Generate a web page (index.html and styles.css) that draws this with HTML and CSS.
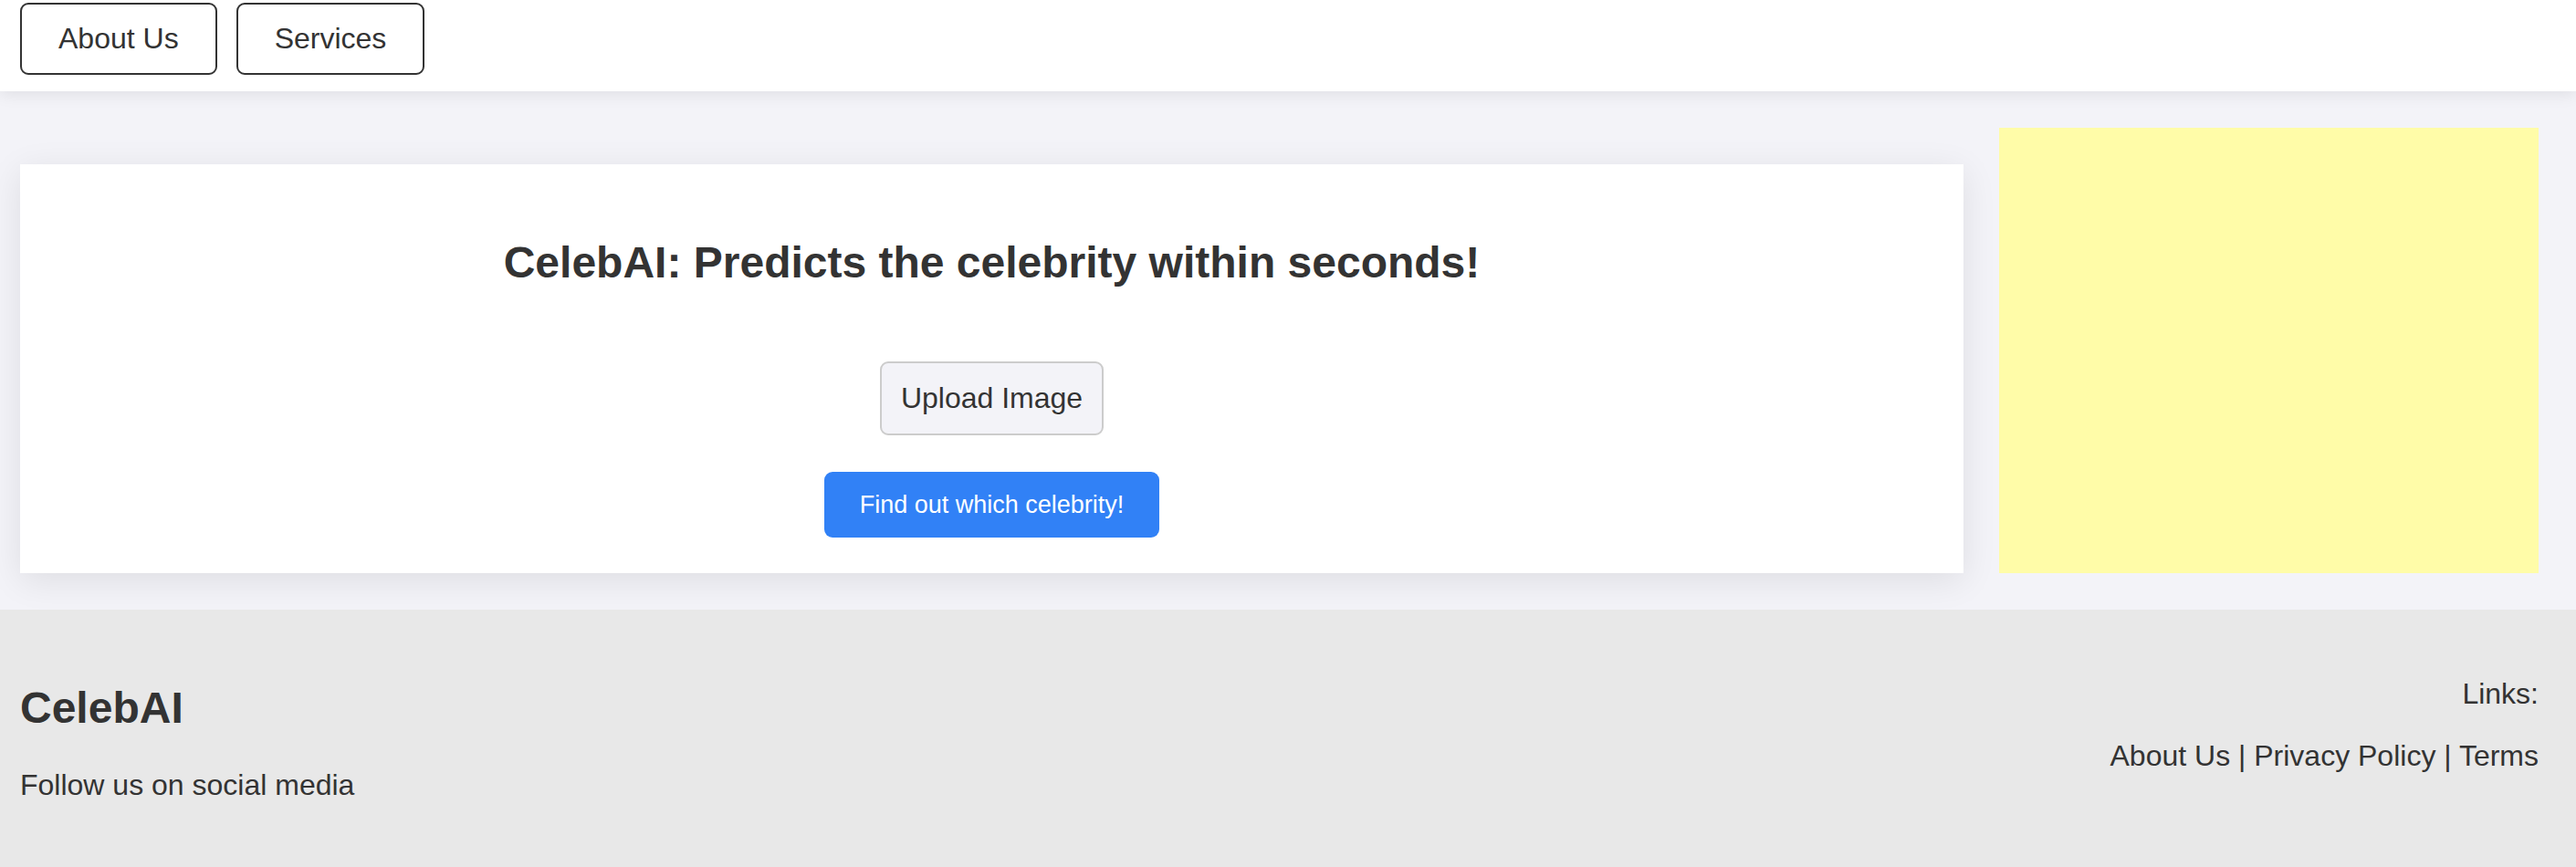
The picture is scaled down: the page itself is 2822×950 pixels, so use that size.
FILE: index.html
```html
<!DOCTYPE html>
<html lang="en">
<head>
<meta charset="utf-8">
<title>CelebAI</title>
<link rel="stylesheet" href="styles.css">
</head>
<body>
<nav class="topnav">
  <button class="nav-btn">About Us</button>
  <button class="nav-btn">Services</button>
</nav>
<main class="main">
  <section class="card">
    <h2 class="card-title">CelebAI: Predicts the celebrity within seconds!</h2>
    <label class="upload-btn">Upload Image</label>
    <button class="find-btn">Find out which celebrity!</button>
  </section>
  <aside class="ad-box"></aside>
</main>
<footer class="footer">
  <div class="footer-left">
    <h2 class="footer-brand">CelebAI</h2>
    <p class="footer-follow">Follow us on social media</p>
  </div>
  <div class="footer-right">
    <p class="footer-links-title">Links:</p>
    <p class="footer-links">About Us | Privacy Policy | Terms</p>
  </div>
</footer>
</body>
</html>
```

FILE: styles.css
```css
* { box-sizing: border-box; }

body {
  margin: 0;
  font-family: "Liberation Sans", Arial, Helvetica, sans-serif;
  color: #333;
  background: #f3f3f8;
}

.topnav {
  position: relative;
  z-index: 2;
  display: flex;
  gap: 21px;
  padding: 3px 22px 18px;
  background: #fff;
  box-shadow: 0 4px 16px rgba(0, 0, 0, 0.08);
}

.nav-btn {
  font-family: inherit;
  font-size: 32px;
  line-height: 37px;
  color: #333;
  background: #fff;
  border: 2px solid #333;
  border-radius: 9px;
  padding: 19px 40px;
  height: 79px;
}

.main {
  display: flex;
  align-items: flex-end;
  gap: 39px;
  padding: 40px 41px 40px 22px;
  background: #f3f3f8;
}

.card {
  flex: 1;
  height: 448px;
  background: #fff;
  box-shadow: 0 8px 36px rgba(0, 0, 0, 0.09);
  display: flex;
  flex-direction: column;
  align-items: center;
  padding: 80px 0 39px;
}

.card-title {
  margin: 0 0 81px;
  font-size: 48px;
  line-height: 55px;
  font-weight: 700;
  color: #333;
}

.upload-btn {
  display: block;
  font-size: 32px;
  line-height: 37px;
  padding: 20px 21px;
  border: 2px solid #cccccc;
  border-radius: 9px;
  background: #f3f3f8;
  color: #333;
}

.find-btn {
  margin-top: 40px;
  font-family: inherit;
  font-size: 27px;
  line-height: 31px;
  padding: 20px 39px;
  height: 72px;
  border: none;
  border-radius: 9px;
  background: #3181f6;
  color: #fff;
}

.ad-box {
  width: 591px;
  height: 488px;
  background: #fffca8;
}

.footer {
  display: flex;
  justify-content: space-between;
  align-items: flex-start;
  background: #e8e8e8;
  padding: 0 41px 40px 22px;
}

.footer-brand {
  margin: 80px 0 39px;
  font-size: 48px;
  line-height: 55px;
  font-weight: 700;
}

.footer-follow {
  margin: 0 0 32px;
  font-size: 32px;
  line-height: 37px;
}

.footer-right { text-align: right; }

.footer-links-title {
  margin: 74px 0 31px;
  font-size: 32px;
  line-height: 37px;
}

.footer-links {
  margin: 0;
  font-size: 32px;
  line-height: 37px;
}
```
